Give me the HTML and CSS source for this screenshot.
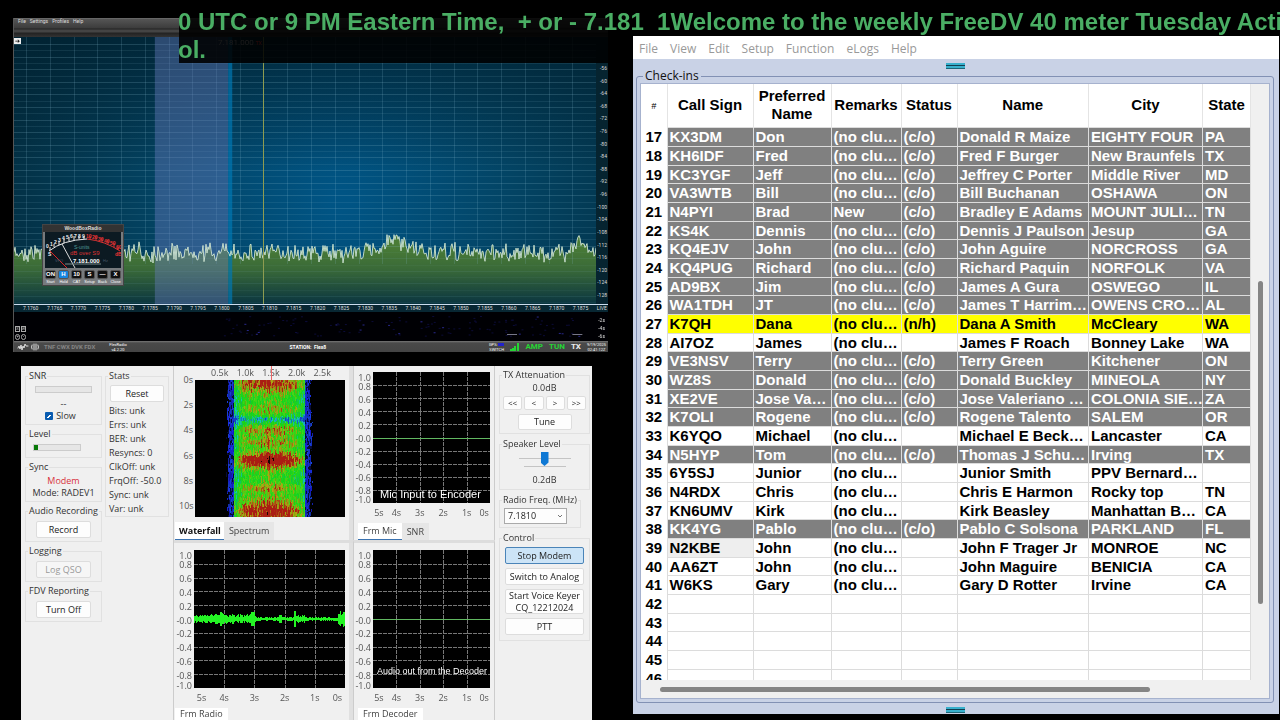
FILE: index.html
```html
<!DOCTYPE html>
<html lang="en">
<head>
<meta charset="utf-8">
<title>FreeDV Activity Net</title>
<link rel="stylesheet" href="styles.css">
</head>
<body>
<div class="ticker"><p>0 UTC or 9 PM Eastern Time,&nbsp; + or - 7.181&nbsp; 1Welcome to the weekly FreeDV 40 meter Tuesday Activity</p><p>ol.</p></div>
<main class="desktop">
<div class="left">
<section class="sdr">
  <nav class="sdr-menu"><a href="#">File</a><a href="#">Settings</a><a href="#">Profiles</a><a href="#">Help</a></nav>
  <div class="pan">
    <div class="pan-main"><canvas id="panadapter"></canvas>
      <span class="pan-arrow">➔</span>
      <div class="tuned">7.181.000 <b>TX</b></div>
      <div class="meter">
        <h2>WoodBoxRadio</h2>
        <div class="meter-face">
          <svg viewBox="0 0 78 36" width="78" height="36" role="img" aria-label="S meter">
            <path d="M4 19Q18 8 42 7" fill="none" stroke="#eee" stroke-width="1"/>
            <path d="M42 7Q60 9 75 19" fill="none" stroke="#d33" stroke-width="1"/>
            <path d="M5 18v-3M9 15v-3M14 13v-4M19 11v-4M24 9v-4M29 8v-4M34 7v-3M39 7v-3" stroke="#eee"/>
            <path d="M45 7v-3M51 8v-4M57 10v-4M63 12v-4M69 15v-4M73 18v-3" stroke="#d33"/>
            <g fill="#eee" font-size="5" font-weight="bold"><text x="1" y="16">0</text><text x="5" y="14">1</text><text x="9" y="12">2</text><text x="13" y="10">3</text><text x="17" y="8">4</text><text x="21" y="7">5</text><text x="25" y="6">6</text><text x="29" y="6">7</text><text x="33" y="6">8</text><text x="37" y="6">9</text><text x="3" y="24">S</text></g>
            <g fill="#e33" font-size="5" font-weight="bold"><text x="41" y="6">10</text><text x="47" y="7">20</text><text x="53" y="9">30</text><text x="59" y="11">40</text><text x="65" y="13">50</text><text x="71" y="17">60</text><text x="70" y="24">dB</text></g>
            <path d="M17 12L30 36" stroke="#ddd"/><path d="M5 19L22 36" stroke="#d22"/>
            <text x="29" y="17" fill="#4e9a9a" font-size="5">S-units</text>
            <text x="25" y="23" fill="#d33" font-size="6">dB over S9</text>
            <text x="10" y="30" fill="#456" font-size="4">VFO</text>
            <text x="28" y="31" fill="#fff" font-size="6" font-weight="bold">7.181.000</text>
            <text x="58" y="30" fill="#456" font-size="4">Hz</text>
            <path d="M20 32h36" stroke="#788"/>
          </svg>
        </div>
        <div class="meter-keys"><label><button>ON</button>Start</label><label><button class="blue">H</button>Hold</label><label><button>10</button>CAT</label><label><button>S</button>Setup</label><label><button>—</button>Back</label><label><button>X</button>Close</label></div>
      </div>
    </div>
    <ol class="db"><li>-56<li>-60<li>-64<li>-68<li>-72<li>-76<li>-80<li>-84<li>-88<li>-92<li>-96<li>-100<li>-104<li>-108<li>-112<li>-116<li>-120<li>-124<li>-128</ol>
  </div>
  <div class="freqs"><span>7.1760</span><span>7.1765</span><span>7.1770</span><span>7.1775</span><span>7.1780</span><span>7.1785</span><span>7.1790</span><span>7.1795</span><span>7.1800</span><span>7.1805</span><span>7.1810</span><span>7.1815</span><span>7.1820</span><span>7.1825</span><span>7.1830</span><span>7.1835</span><span>7.1840</span><span>7.1845</span><span>7.1850</span><span>7.1855</span><span>7.1860</span><span>7.1865</span><span>7.1870</span><span>7.1875</span><span>LIVE</span></div>
  <div class="history"><canvas id="history"></canvas>
    <div class="zoomers"><i>S</i><i>B</i><i>+</i><i>-</i></div><div class="secs"><span>-2s</span><span>-4s</span><span>-6s</span></div></div>
  <footer class="status">
    <svg class="wave" viewBox="0 0 24 10" width="24" height="10" fill="none" stroke="#ddd" stroke-linecap="round"><path d="M1 6l1-2 1 3 1-4 1 5 1-4 1 2 1-4 1 2h2"/><path d="M15 3q-1 2 0 4M21 3q1 2 0 4M17 2v6M19 2v6"/></svg>
    <span class="modes">TNF CWX DVK FDX</span>
    <span class="tiny version">FlexRadio<br>v4.2.20</span>
    <span class="station">STATION: &nbsp;Flex8</span>
    <span class="tiny gps">GPS: <b></b><br>SWITCH</span>
    <svg viewBox="0 0 9 8" width="9" height="8" fill="#25d534"><path d="M0 6h2v2H0zM2 5h2v3H2zM4 3h2v5H4zM7 0h2v8H7z"/></svg>
    <strong class="on">AMP</strong><strong class="on">TUN</strong><strong>TX</strong>
    <span class="tiny">9/19/2025<br>02:41:12Z</span>
  </footer>
</section>

<section class="dv">
  <div class="dv-left">
    <div class="groups">
      <fieldset class="g-snr"><legend>SNR</legend><div class="gauge"></div><p>--</p><label class="check"><input type="checkbox" checked> Slow</label></fieldset>
      <fieldset class="g-level"><legend>Level</legend><div class="gauge level"><i></i></div></fieldset>
      <fieldset class="g-sync"><legend>Sync</legend><p class="red">Modem</p><p>Mode: RADEV1</p></fieldset>
      <fieldset class="g-one"><legend>Audio Recording</legend><button>Record</button></fieldset>
      <fieldset class="g-one"><legend>Logging</legend><button disabled>Log QSO</button></fieldset>
      <fieldset class="g-one"><legend>FDV Reporting</legend><button>Turn Off</button></fieldset>
    </div>
    <fieldset class="stats"><legend>Stats</legend><button>Reset</button><p>Bits: unk</p><p>Errs: unk</p><p>BER: unk</p><p>Resyncs: 0</p><p>ClkOff: unk</p><p>FrqOff: -50.0</p><p>Sync: unk</p><p>Var: unk</p></fieldset>
  </div>
  <div class="pane wide upper">
    <div class="khz"><span>0.5k</span><span>1.0k</span><span>1.5k</span><span>2.0k</span><span>2.5k</span></div>
    <div class="fall"><ol><li>0s<li>2s<li>4s<li>6s<li>8s<li>10s</ol><canvas id="waterfall"></canvas></div>
    <div class="tabs"><button class="sel bold">Waterfall</button><button>Spectrum</button></div>
  </div>
  <div class="pane upper">
    <div class="scope"><ol><li>1.0<li>0.8<li>0.6<li>0.4<li>0.2<li>-0.0<li>-0.2<li>-0.4<li>-0.6<li>-0.8<li>-1.0</ol><div class="screen"><canvas class="trace"></canvas><span class="caption big">Mic Input to Encoder</span></div></div>
    <div class="secs-x"><span>5s</span><span>4s</span><span>3s</span><span>2s</span><span>1s</span><span>0s</span></div>
    <div class="tabs"><button class="sel">Frm Mic</button><button>SNR</button></div>
  </div>
  <div class="pane wide lower">
    <div class="scope"><ol><li>1.0<li>0.8<li>0.6<li>0.4<li>0.2<li>-0.0<li>-0.2<li>-0.4<li>-0.6<li>-0.8<li>-1.0</ol><div class="screen"><canvas class="trace" data-signal="radio"></canvas></div></div>
    <div class="secs-x"><span>5s</span><span>4s</span><span>3s</span><span>2s</span><span>1s</span><span>0s</span></div>
    <div class="tabs"><button class="sel">Frm Radio</button></div>
  </div>
  <div class="pane lower">
    <div class="scope"><ol><li>1.0<li>0.8<li>0.6<li>0.4<li>0.2<li>-0.0<li>-0.2<li>-0.4<li>-0.6<li>-0.8<li>-1.0</ol><div class="screen"><canvas class="trace"></canvas><span class="caption">Audio out from the Decoder</span></div></div>
    <div class="secs-x"><span>5s</span><span>4s</span><span>3s</span><span>2s</span><span>1s</span><span>0s</span></div>
    <div class="tabs"><button class="sel">Frm Decoder</button></div>
  </div>
  <div class="dv-right">
    <fieldset class="g-tx"><legend>TX Attenuation</legend><p>0.0dB</p><div class="steps"><button>&lt;&lt;</button><button>&lt;</button><button>&gt;</button><button>&gt;&gt;</button></div><button class="tune">Tune</button></fieldset>
    <fieldset class="g-spk"><legend>Speaker Level</legend><input type="range" aria-label="Speaker Level" min="0" max="100" value="50"><p>0.2dB</p></fieldset>
    <fieldset class="g-freq"><legend>Radio Freq. (MHz)</legend><div class="combo"><select aria-label="Radio frequency"><option>7.1810</option></select><svg viewBox="0 0 6 4" width="6" height="4" fill="none" stroke="#777"><path d="M1 1l2 2 2-2"/></svg></div></fieldset>
    <fieldset class="g-ctl"><legend>Control</legend><button class="active">Stop Modem</button><button>Switch to Analog</button><button class="tall">Start Voice Keyer<br>CQ_12212024</button><button>PTT</button></fieldset>
  </div>
</section>
</div>

<section class="log">
  <nav class="log-menu"><a href="#">File</a><a href="#">View</a><a href="#">Edit</a><a href="#">Setup</a><a href="#">Function</a><a href="#">eLogs</a><a href="#">Help</a></nav>
  <div class="log-body">
    <div class="grip"></div>
    <fieldset class="checkins"><legend>Check-ins</legend>
    <div class="sheet">
    <div class="view">
    <table>
      <colgroup><col class="c-n"><col class="c-call"><col class="c-pref"><col class="c-rem"><col class="c-stat"><col><col class="c-city"><col class="c-st"></colgroup>
      <thead><tr><th class="hash">#</th><th>Call Sign</th><th>Preferred Name</th><th>Remarks</th><th>Status</th><th>Name</th><th>City</th><th>State</th></tr></thead>
      <tbody>
      <tr class="out"><th>17</th><td>KX3DM</td><td>Don</td><td>(no clu…</td><td>(c/o)</td><td>Donald R Maize</td><td>EIGHTY FOUR</td><td>PA</td></tr>
      <tr class="out"><th>18</th><td>KH6IDF</td><td>Fred</td><td>(no clu…</td><td>(c/o)</td><td>Fred F Burger</td><td>New Braunfels</td><td>TX</td></tr>
      <tr class="out"><th>19</th><td>KC3YGF</td><td>Jeff</td><td>(no clu…</td><td>(c/o)</td><td>Jeffrey C Porter</td><td>Middle River</td><td>MD</td></tr>
      <tr class="out"><th>20</th><td>VA3WTB</td><td>Bill</td><td>(no clu…</td><td>(c/o)</td><td>Bill Buchanan</td><td>OSHAWA</td><td>ON</td></tr>
      <tr class="out"><th>21</th><td>N4PYI</td><td>Brad</td><td>New</td><td>(c/o)</td><td>Bradley E Adams</td><td>MOUNT JULI…</td><td>TN</td></tr>
      <tr class="out"><th>22</th><td>KS4K</td><td>Dennis</td><td>(no clu…</td><td>(c/o)</td><td>Dennis J Paulson</td><td>Jesup</td><td>GA</td></tr>
      <tr class="out"><th>23</th><td>KQ4EJV</td><td>John</td><td>(no clu…</td><td>(c/o)</td><td>John Aguire</td><td>NORCROSS</td><td>GA</td></tr>
      <tr class="out"><th>24</th><td>KQ4PUG</td><td>Richard</td><td>(no clu…</td><td>(c/o)</td><td>Richard Paquin</td><td>NORFOLK</td><td>VA</td></tr>
      <tr class="out"><th>25</th><td>AD9BX</td><td>Jim</td><td>(no clu…</td><td>(c/o)</td><td>James A Gura</td><td>OSWEGO</td><td>IL</td></tr>
      <tr class="out"><th>26</th><td>WA1TDH</td><td>JT</td><td>(no clu…</td><td>(c/o)</td><td>James T Harrim…</td><td>OWENS CRO…</td><td>AL</td></tr>
      <tr class="mark"><th>27</th><td>K7QH</td><td>Dana</td><td>(no clu…</td><td>(n/h)</td><td>Dana A Smith</td><td>McCleary</td><td>WA</td></tr>
      <tr><th>28</th><td>AI7OZ</td><td>James</td><td>(no clu…</td><td></td><td>James F Roach</td><td>Bonney Lake</td><td>WA</td></tr>
      <tr class="out"><th>29</th><td>VE3NSV</td><td>Terry</td><td>(no clu…</td><td>(c/o)</td><td>Terry Green</td><td>Kitchener</td><td>ON</td></tr>
      <tr class="out"><th>30</th><td>WZ8S</td><td>Donald</td><td>(no clu…</td><td>(c/o)</td><td>Donald Buckley</td><td>MINEOLA</td><td>NY</td></tr>
      <tr class="out"><th>31</th><td>XE2VE</td><td>Jose Va…</td><td>(no clu…</td><td>(c/o)</td><td>Jose Valeriano …</td><td>COLONIA SIE…</td><td>ZA</td></tr>
      <tr class="out"><th>32</th><td>K7OLI</td><td>Rogene</td><td>(no clu…</td><td>(c/o)</td><td>Rogene Talento</td><td>SALEM</td><td>OR</td></tr>
      <tr><th>33</th><td>K6YQO</td><td>Michael</td><td>(no clu…</td><td></td><td>Michael E Beck…</td><td>Lancaster</td><td>CA</td></tr>
      <tr class="out"><th>34</th><td>N5HYP</td><td>Tom</td><td>(no clu…</td><td>(c/o)</td><td>Thomas J Schu…</td><td>Irving</td><td>TX</td></tr>
      <tr><th>35</th><td>6Y5SJ</td><td>Junior</td><td>(no clu…</td><td></td><td>Junior Smith</td><td>PPV Bernard…</td><td></td></tr>
      <tr><th>36</th><td>N4RDX</td><td>Chris</td><td>(no clu…</td><td></td><td>Chris E Harmon</td><td>Rocky top</td><td>TN</td></tr>
      <tr><th>37</th><td>KN6UMV</td><td>Kirk</td><td>(no clu…</td><td></td><td>Kirk Beasley</td><td>Manhattan B…</td><td>CA</td></tr>
      <tr class="out"><th>38</th><td>KK4YG</td><td>Pablo</td><td>(no clu…</td><td>(c/o)</td><td>Pablo C Solsona</td><td>PARKLAND</td><td>FL</td></tr>
      <tr><th>39</th><td class="cursor">N2KBE</td><td>John</td><td>(no clu…</td><td></td><td>John F Trager Jr</td><td>MONROE</td><td>NC</td></tr>
      <tr><th>40</th><td>AA6ZT</td><td>John</td><td>(no clu…</td><td></td><td>John Maguire</td><td>BENICIA</td><td>CA</td></tr>
      <tr><th>41</th><td>W6KS</td><td>Gary</td><td>(no clu…</td><td></td><td>Gary D Rotter</td><td>Irvine</td><td>CA</td></tr>
      <tr><th>42</th><td></td><td></td><td></td><td></td><td></td><td></td><td></td></tr>
      <tr><th>43</th><td></td><td></td><td></td><td></td><td></td><td></td><td></td></tr>
      <tr><th>44</th><td></td><td></td><td></td><td></td><td></td><td></td><td></td></tr>
      <tr><th>45</th><td></td><td></td><td></td><td></td><td></td><td></td><td></td></tr>
      <tr><th>46</th><td></td><td></td><td></td><td></td><td></td><td></td><td></td></tr>
      </tbody>
    </table>
    </div>
    <div class="vbar"><i></i></div>
    <div class="hbar"><i></i></div>
    </div>
    </fieldset>
    <div class="grip"></div>
  </div>
</section>
</main>
<script src="app.js"></script>
</body>
</html>
```

FILE: styles.css
```css
* { box-sizing: border-box; }
body { margin: 0; background: #000; overflow: hidden; font-family: "Open Sans", "Noto Sans", sans-serif; }
p, h2, ol { margin: 0; padding: 0; }
ol { list-style: none; }
a { color: inherit; text-decoration: none; }
canvas { display: block; width: 100%; height: 100%; }

.desktop { display: grid; grid-template-columns: 595fr 646fr; gap: 25px; height: 100vh; padding: 0 1px 0 13px; }
.left { display: flex; flex-direction: column; gap: 14px; padding-top: 18px; min-width: 0; min-height: 0; }

/* scrolling banner */
.ticker { position: absolute; z-index: 1; top: 0; left: 179px; right: 0; height: 63px; padding-top: 8px; background: rgba(0,0,0,.88); color: #4aae64; font: bold 24px/28px "Liberation Sans", Arial, sans-serif; text-indent: -1px; white-space: nowrap; overflow: hidden; }

/* panadapter window */
.sdr { flex: 1; display: flex; flex-direction: column; min-height: 0; border-left: 1px solid #555; background: #000; font-family: Roboto, sans-serif; color: #ddd; }
.sdr-menu { display: flex; gap: 4px; height: 19px; padding-left: 4px; background: linear-gradient(#777 0, #555 1px, #3c3c3c 10px, #222 11px, #444 12px, #444 14px, #222 15px, #333); font-size: 5px; line-height: 6px; }
.pan { flex: 1; display: flex; min-height: 0; }
.pan-main { flex: 1; position: relative; min-width: 0; }
.pan-main canvas { position: absolute; }
.pan-arrow { position: absolute; top: 1px; left: 0; width: 7px; height: 6px; background: #eee; color: #000; font: 6px/6px "DejaVu Sans", sans-serif; text-align: center; }
.tuned { position: absolute; top: 0; left: 204px; font-size: 8px; line-height: 12px; color: #ccc; }
.tuned b { color: #f44; font-size: 5px; }
.db { display: flex; flex-direction: column; justify-content: space-between; width: 12px; padding: 28px 1px 5px 0; background: #062430; font-size: 5px; line-height: 7px; text-align: right; }
.freqs { display: flex; justify-content: space-between; height: 8px; padding: 0 1px 0 9px; border-top: 1px solid #cde; background: #082733; font-size: 5px; line-height: 7px; }
.history { position: relative; height: 29px; }
.zoomers { position: absolute; left: 1px; bottom: 1px; display: grid; grid-template-columns: 5px 5px; gap: 2px 1px; font-size: 4px; line-height: 5px; }
.zoomers i { border: 1px solid #aaa; height: 6px; line-height: 4px; text-align: center; }
.zoomers i:nth-child(n+3) { border-radius: 3px; }
.secs { position: absolute; right: 3px; top: 4px; display: flex; flex-direction: column; font-size: 5px; line-height: 8px; }
.status { display: flex; align-items: center; gap: 6px; height: 11px; padding: 0 2px 0 3px; background: linear-gradient(#777, #4a4a4a 2px, #444); font-size: 6px; }
.modes { color: #858585; font-size: 6px; font-weight: 700; white-space: nowrap; margin-left: -3px; }
.tiny { font-size: 4px; line-height: 5px; color: #fff; text-align: center; }
.version { margin-left: 8px; }
.station { flex: 1; text-align: center; font-size: 5px; font-weight: 700; color: #fff; }
.gps b { display: inline-block; width: 6px; height: 3px; background: #22c; }
.status strong { font-size: 8px; color: #eee; }
.status strong.on { color: #25d534; }
.meter { position: absolute; left: 28px; bottom: 18px; width: 82px; height: 62px; padding: 0 2px; background: #777b7e; border: 1px solid #444; font-family: "Liberation Sans", Arial, sans-serif; }
.meter h2 { margin: 0 -2px; background: #333; color: #ddd; font-size: 5px; line-height: 7px; text-align: center; }
.meter-face { height: 36px; overflow: hidden; background: #0c1a22; }
.meter-keys { display: grid; grid-template-columns: repeat(6, 1fr); gap: 2px; padding-top: 2px; }
.meter-keys label { font-size: 4px; line-height: 5px; text-align: center; color: #fff; white-space: nowrap; }
.meter-keys button { display: block; width: 100%; height: 9px; padding: 0; border: 1px solid #555; border-radius: 2px; background: #111; color: #fff; font: bold 6px/7px "Liberation Sans", Arial, sans-serif; }
.meter-keys .blue { background: #1685e0; }

/* FreeDV window */
.dv { display: grid; grid-template-columns: 153px 180fr 141fr 97px; grid-template-rows: 174px 180px; height: 354px; margin: 0 16px 0 8px; overflow: hidden; background: #f0f0f0; color: #333; font-size: 9px; line-height: 12px; }
.dv button, .dv select { font: inherit; color: #222; margin: 0; padding: 0; border: 1px solid #ddd; border-radius: 2px; background: #fdfdfd; }
.dv button:disabled { color: #999; background: #f6f6f6; }
.dv fieldset { min-width: 0; margin: 0; padding: 0; border: 1px solid #e1e1e1; }
.dv legend { margin: 0 auto 0 2px; padding: 0 1px; line-height: 12px; }
.dv-left { grid-row: 1 / 3; display: flex; align-items: flex-start; gap: 3px; padding: 4px 4px 0 4px; border-right: 1px solid #ccc; }
.groups { display: flex; flex-direction: column; gap: 3px; width: 77px; }
.groups p, .dv-right p { text-align: center; }
.g-snr { height: 55px; }
.gauge { width: 57px; height: 7px; margin: 4px auto 5px; background: #e6e6e6; border: 1px solid #ccc; }
.check { display: flex; align-items: center; justify-content: center; gap: 3px; margin-right: 6px; }
.check input { appearance: none; width: 8px; height: 8px; margin: 0; border-radius: 1px; background: #0a5cb0 linear-gradient(135deg, transparent 40%, #fff 40%, #fff 60%, transparent 60%) center / 4px 3px no-repeat; }
.g-level { height: 30px; }
.level { width: 48px; margin: 4px 0 0 7px; }
.level i { display: block; width: 4px; height: 5px; background: #087a08; }
.g-sync { height: 41px; }
.g-sync legend + p { margin-top: 2px; }
.red { color: #d8303c; }
.g-one { height: 37px; text-align: center; }
.g-one button { width: 55px; height: 17px; }
.dv .g-one button { margin-top: 4px; }
.stats { flex: 1; height: 147px; }
.dv .stats button { display: block; width: 54px; height: 17px; margin: 3px auto 2px; }
.stats p { margin-left: 3px; line-height: 14px; }
.pane { display: flex; flex-direction: column; min-width: 0; padding: 6px 4px 0 4px; border-right: 1px solid #ccc; }
.wide { padding: 6px 8px 0 5px; box-shadow: inset -4px 0 #e0e0e0; }
.lower { border-top: 3px solid #ddd; padding-top: 7px; }
.khz { position: relative; display: flex; justify-content: space-between; height: 8px; margin: 0 14px 0 32px; line-height: 1px; color: #555; }
.khz::after { content: ""; position: absolute; left: 50%; top: -6px; width: 1px; height: 14px; background: #e66; }
.fall { display: flex; height: 137px; min-width: 0; }
.fall ol { display: flex; flex-direction: column; justify-content: space-between; flex: none; width: 16px; height: 143px; margin-top: -6px; padding: 0 2px 5px 0; text-align: right; color: #555; }
.fall canvas { flex: 1; width: 0; min-width: 0; height: 137px; background: #000; }
.scope { display: flex; height: 131px; }
.lower .scope { height: 138px; }
.scope ol { display: flex; flex-direction: column; flex: none; width: 15px; padding: 3px 2px 0 0; text-align: right; color: #555; }
.scope li { flex: 1; display: flex; align-items: center; justify-content: flex-end; min-height: 0; height: 0; white-space: nowrap; }
.scope li:first-child, .scope li:last-child { flex: none; height: 5px; }
.screen { position: relative; flex: 1; min-width: 0; background: #000; }
.caption { position: absolute; left: 4px; bottom: 11px; color: #fff; font: 9px/12px "Liberation Sans", Arial, sans-serif; white-space: nowrap; }
.caption.big { left: 7px; bottom: 3px; font-size: 11px; }
.secs-x { display: grid; grid-template-columns: 1fr 2fr 2fr 2fr 2fr 1fr; margin: 4px 0 4px 15px; text-align: center; color: #555; }
.secs-x span { min-width: 0; }
.tabs { display: flex; align-self: flex-start; height: 18px; margin: 0 0 0 -4px; }
.pane:not(.wide) .tabs { margin-left: 0; }
.upper .tabs { margin-top: auto; }
.dv .tabs button { padding: 0 5px; border: 0; border-radius: 0; background: #e6e6e6; color: #444; }
.dv .tabs .sel { background: #fff; border-bottom: 1px solid #3a72b0; }
.dv .tabs .bold { padding: 0 3px 0 4px; font-weight: 700; color: #111; }
.dv-right { grid-column: 4; grid-row: 1 / 3; display: flex; flex-direction: column; gap: 4px; padding: 3px 2px 0 4px; }
.g-tx { height: 65px; }
.g-tx p { margin-top: 1px; }
.steps { display: grid; grid-template-columns: repeat(4, 1fr); gap: 2px; margin: 2px 3px 4px; }
.dv .steps button { height: 14px; font-size: 8px; line-height: 10px; }
.tune { display: block; width: 54px; height: 16px; }
.dv .tune { margin: 0 auto; }
.g-spk { height: 52px; text-align: center; }
.g-spk input { appearance: none; display: block; width: 52px; height: 16px; margin: 1px auto 7px; background: linear-gradient(#c4c4c4, #c4c4c4) center 7px / 100% 1px no-repeat, linear-gradient(#c4c4c4, #c4c4c4) center 15px / 42px 1px no-repeat; }
.g-spk input::-webkit-slider-thumb { appearance: none; width: 8px; height: 14px; background: #0f78d4; clip-path: polygon(0 0, 100% 0, 100% 75%, 50% 100%, 0 75%); }
.dv .g-freq { height: 34px; margin-right: 9px; }
.combo { position: relative; width: 63px; margin: 2px 0 0 4px; }
.combo select { appearance: none; display: block; width: 100%; height: 16px; padding-left: 3px; border-color: #aaa; border-radius: 0; }
.combo svg { position: absolute; right: 4px; top: 6px; }
.g-ctl { height: 109px; }
.dv .g-ctl button { display: block; width: 79px; height: 17px; margin: 4px auto 0; }
.dv .g-ctl .active { margin-top: 3px; background: #cce4f7; border-color: #4a84b8; }
.dv .g-ctl .tall { height: 25px; line-height: 12px; }

/* net log window */
.log { position: relative; z-index: 2; display: flex; flex-direction: column; min-width: 0; min-height: 0; margin: 36px 0 6px; background: #c9d2e6; }
.log-menu { display: flex; gap: 12px; height: 23px; padding-left: 6px; background: #fff; color: #999; font-size: 12px; line-height: 25px; }
.log-body { flex: 1; display: flex; flex-direction: column; min-height: 0; padding: 4px 5px 1px 3px; }
.grip { align-self: center; flex: none; width: 19px; height: 6px; background: linear-gradient(#38b0cc 2px, #123e50 2px, #123e50 3px, #38b0cc 3px, #38b0cc 5px, #1c6678 5px); }
.checkins { flex: 1; display: flex; flex-direction: column; min-width: 0; min-height: 0; margin: 0 0 4px; padding: 0 3px 3px; border: 1px solid #8291b4; border-radius: 3px; }
.checkins legend { margin-left: 3px; padding: 0 2px; color: #111; font-size: 12px; line-height: 14px; }
.sheet { height: 100%; min-height: 0; display: grid; grid-template: 1fr 18px / 1fr 18px; border: 1px solid #a6b2ce; background: #f0f0f0; }
.view { min-width: 0; min-height: 0; overflow: hidden; background: #fff; }
table { width: 100%; table-layout: fixed; border-collapse: collapse; font: bold 15px/17px "Liberation Sans", Arial, sans-serif; color: #000; }
.c-n { width: 26px; } .c-call { width: 86px; } .c-pref { width: 78px; } .c-rem { width: 70px; } .c-stat { width: 56px; } .c-city { width: 114px; } .c-st { width: 48px; }
thead th { height: 43px; padding: 0; line-height: 18px; border-right: 1px solid #e4e4e4; }
.hash { font: italic 9px/10px "Liberation Sans", Arial, sans-serif; }
tbody tr { height: 19px; }
tbody tr:nth-child(3n) { height: 18px; }
tbody th { padding: 0; text-align: center; border-right: 1px solid #dcdcdc; }
tbody td { padding: 0 0 0 2px; white-space: nowrap; overflow: hidden; border: 1px solid #dcdcdc; }
.out td { background: #808080; color: #fff; }
.mark td { background: #ff0; }
.cursor { background: #eee; }
.vbar { padding: 197px 6px 76px 7px; }
.vbar i { display: block; width: 5px; height: 100%; border-radius: 3px; background: #858585; }
.hbar { padding: 7px 101px 0 19px; grid-column: 1; }
.hbar i { display: block; height: 5px; border-radius: 3px; background: #858585; }
```

FILE: app.js
```js
let seed = 7;
const rnd = () => (seed = (seed * 16807) % 2147483647) / 2147483647;

function setup(canvas) {
  const w = canvas.width = canvas.clientWidth;
  const h = canvas.height = canvas.clientHeight;
  return [canvas.getContext('2d'), w, h];
}

function drawPanadapter() {
  const [c, w, h] = setup(document.getElementById('panadapter'));
  const sky = c.createRadialGradient(w * .56, h * .62, 10, w * .56, h * .62, w * .58);
  sky.addColorStop(0, '#005484');
  sky.addColorStop(.5, '#034464');
  sky.addColorStop(1, '#033044');
  c.fillStyle = sky;
  c.fillRect(0, 0, w, h);
  const shade = c.createLinearGradient(0, 0, 0, h * .5);
  shade.addColorStop(0, 'rgba(0,30,44,.7)');
  shade.addColorStop(1, 'rgba(0,30,44,0)');
  c.fillStyle = shade;
  c.fillRect(0, 0, w, h);

  const pts = [];
  for (let x = 0; x <= w; x++) {
    const bump = 11 * Math.exp(-(((x - w * .65) / 18) ** 2)) + 7 * Math.exp(-(((x - w * .65) / 3) ** 2))
      + 12 * Math.exp(-(((x - w * .97) / 8) ** 2));
    pts.push(h * .808 - bump + (rnd() + rnd() - 1) * 11);
  }
  c.beginPath();
  c.moveTo(0, h);
  pts.forEach((y, x) => c.lineTo(x, y));
  c.lineTo(w, h);
  const grass = c.createLinearGradient(0, h * .78, 0, h);
  grass.addColorStop(0, '#4a7c36');
  grass.addColorStop(.4, '#3a6a38');
  grass.addColorStop(1, '#0a3540');
  c.fillStyle = grass;
  c.fill();

  for (let i = 0, y = 7; y < h; y += 6.3, i++) {
    const k = y > h * .8 ? .5 : 1;
    c.fillStyle = `rgba(130,180,200,${(i % 2 ? .12 : .22) * k})`;
    c.fillRect(0, Math.round(y), w, 1);
  }
  for (let i = 0, x = w * .021; x < w; x += w * .0408, i++) {
    if (i === 10) continue;
    c.fillStyle = 'rgba(140,190,210,.18)';
    c.fillRect(Math.round(x), 0, 1, h * .85);
  }
  c.fillStyle = 'rgba(105,125,190,.42)';
  c.fillRect(w * .242, 0, w * .126, h);
  c.fillStyle = 'rgba(0,120,180,.7)';
  c.fillRect(w * .368, 0, w * .007, h);
  c.beginPath();
  pts.forEach((y, x) => c.lineTo(x, y));
  c.strokeStyle = 'rgba(215,235,215,.85)';
  c.lineWidth = 1;
  c.stroke();
  c.fillStyle = '#8e9c50';
  c.fillRect(Math.round(w * .428), 0, 1, h);
}

function drawHistory() {
  const [c, w, h] = setup(document.getElementById('history'));
  c.fillStyle = '#000004';
  c.fillRect(0, 0, w, h);
  for (let i = 0; i < 130; i++) {
    c.fillStyle = i % 8 ? '#0b0b38' : '#28288c';
    c.fillRect((.35 + rnd() * .6) * w, 4 + rnd() * 20, 2, 1);
  }
  c.fillStyle = '#778';
  c.fillRect(w * .83, 22, 10, 1);
  c.fillRect(w * .94, 22, 10, 1);
}

function drawWaterfall() {
  const [c, w, h] = setup(document.getElementById('waterfall'));
  c.fillStyle = '#000';
  c.fillRect(0, 0, w, h);
  const band = (y, at, size) => Math.exp(-(((y - at) / size) ** 2));
  const column = Array.from({ length: w }, () => (rnd() - .5) * .16);
  for (let x = 0; x < w; x++) {
    const d = Math.abs(x / w - .493) / .275;
    let y = 0;
    while (y < h) {
      const run = 1 + Math.floor(rnd() * 4);
      const p = y / h;
      const energy = .62 + .42 * band(p, .02, .06) + .16 * band(p, .2, .03) + .26 * band(p, .36, .04) + .26 * band(p, .45, .03)
        + .6 * band(p, .575, .055) + .22 * band(p, .78, .03) + .46 * band(p, .96, .1) - .35 * band(p, .28, .025);
      const v = energy * (1 - .62 * d ** 2.4) + column[x] + (rnd() - .5) * .34;
      if (d < .97 + rnd() * .08) {
        let hue, light;
        if (d > .87) {
          hue = 225 + rnd() * 15;
          light = rnd() < .25 ? 12 : 35 + rnd() * 15;
        } else if (v < .42) {
          hue = Math.min(225, 130 + (.42 - v) * 300);
          light = 42;
        } else {
          hue = v < .72 ? 128 - (v - .42) * 90 : Math.max(4, 90 - (v - .72) * 320);
          light = v > 1.3 ? 6 : v < .72 ? 46 : 37;
        }
        c.fillStyle = `hsl(${hue},80%,${light}%)`;
        c.fillRect(x, y, 1, run);
      }
      y += run;
    }
  }
}

function drawTrace(canvas) {
  const [c, w, h] = setup(canvas);
  c.strokeStyle = '#777';
  c.setLineDash([4, 1]);
  c.beginPath();
  for (let i = 1; i < 10; i++) {
    const y = Math.round(h * i / 10) + .5;
    c.moveTo(0, y);
    c.lineTo(w, y);
  }
  for (let i = 1; i < 5; i++) {
    const x = Math.round(w * i / 5) + .5;
    c.moveTo(x, 0);
    c.lineTo(x, h);
  }
  c.stroke();
  const mid = Math.round(h / 2);
  if (canvas.dataset.signal !== 'radio') {
    c.fillStyle = '#61b861';
    c.fillRect(0, mid, w, 1);
    return;
  }
  c.fillStyle = '#24f424';
  for (let x = 0; x < w; x++) {
    const t = x / w;
    let a = t < .41 ? 2 + rnd() * 3 : 1 + rnd();
    if (t > .13 && t < .19) a += 1;
    if (Math.abs(t - .175) < .006 || Math.abs(t - .385) < .014) a = 7;
    if (Math.abs(t - .57) < .01) a = 4;
    if (Math.abs(t - .665) < .005) a = 8;
    if (t > .67 && t < .73) a = 2 + rnd() * 2;
    if (t > .95) a = 3 + rnd() * 5;
    c.fillRect(x, Math.round(mid - a), 1, Math.round(a * 2));
  }
}

drawPanadapter();
drawHistory();
drawWaterfall();
document.querySelectorAll('.trace').forEach(drawTrace);
```
